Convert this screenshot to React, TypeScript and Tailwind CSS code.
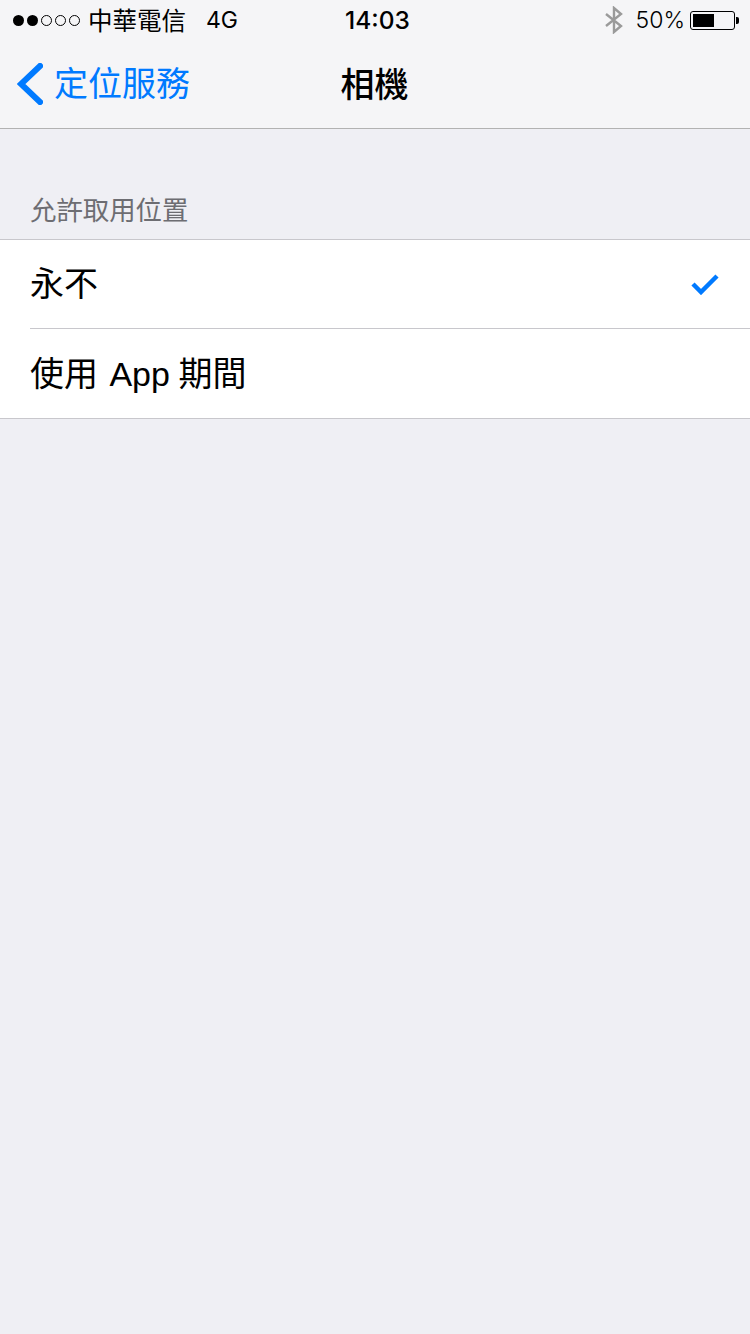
const font = { fontFamily: '"Liberation Sans", "Noto Sans CJK TC", sans-serif' };
const statusFont = { fontFamily: '"Inter", "Noto Sans CJK TC", sans-serif' };

function Dots() {
  return (
    <div className="flex items-center gap-[3px]">
      <span className="w-[11px] h-[11px] rounded-full bg-black" />
      <span className="w-[11px] h-[11px] rounded-full bg-black" />
      <span className="w-[11px] h-[11px] rounded-full border border-black" />
      <span className="w-[11px] h-[11px] rounded-full border border-black" />
      <span className="w-[11px] h-[11px] rounded-full border border-black" />
    </div>
  );
}

function Battery() {
  return (
    <div className="flex items-center">
      <div className="w-[45px] h-[19px] rounded-[3px] border border-black p-[2px]">
        <div className="w-[21px] h-full bg-black" />
      </div>
      <div className="w-[3px] h-[7px] bg-black rounded-r-[2px] ml-[1px]" />
    </div>
  );
}

export default function App() {
  return (
    <div className="w-[750px] h-[1334px] bg-[#efeff4] text-black overflow-hidden" style={font}>
      {/* Status + nav */}
      <div className="h-[129px] bg-[#f5f5f7] border-b border-[#b2b2b2]">
        <div className="h-[40px] flex items-center justify-between pl-[13px] pr-[11px] relative" style={statusFont}>
          <div className="flex items-center">
            <Dots />
            <span className="ml-[8px] mt-[2px] leading-none text-[24.5px]">中華電信</span>
            <span className="ml-[20px] mt-[1px] leading-none text-[23px]">4G</span>
          </div>
          <span className="absolute left-[345px] top-[8px] text-[24.5px] font-medium leading-none">14:03</span>
          <div className="flex items-center">
            <svg width="18" height="28" viewBox="0 0 18 28" fill="none" stroke="#9a9a9a" strokeWidth="2.4">
              <path d="M1 8 L16 20 L9 26 L9 2 L16 8 L1 20" />
            </svg>
            <span className="ml-[13px] text-[23px] leading-none font-light">50%</span>
            <div className="ml-[5px]">
              <Battery />
            </div>
          </div>
        </div>
        <div className="h-[88px] relative flex items-center justify-center">
          <div className="absolute left-[17px] top-0 h-[88px] flex items-center">
            <svg width="26" height="42" viewBox="0 0 26 42" fill="none" stroke="#007aff" strokeWidth="6" strokeLinecap="square">
              <path d="M23 3 L4 21 L23 39" />
            </svg>
            <span className="ml-[11px] text-[34px] leading-none text-[#007aff]">定位服務</span>
          </div>
          <span className="text-[34px] font-medium leading-none mt-[1px] -ml-[1px]">相機</span>
        </div>
      </div>

      {/* Section */}
      <div className="h-[110px] flex items-end pl-[30px] pb-[15px]">
        <span className="text-[26.4px] leading-none text-[#6d6d72]">允許取用位置</span>
      </div>
      <div className="bg-white border-y border-[#c8c7cc]">
        <div className="h-[88px] flex items-center justify-between pr-[31px] pl-[30px]">
          <span className="text-[34px] leading-none">永不</span>
          <svg width="28" height="22" viewBox="0 0 28 22" fill="none" stroke="#007aff" strokeWidth="4.5">
            <path d="M2 11 L10 19 L26 3" />
          </svg>
        </div>
        <div className="ml-[30px] border-t border-[#c8c7cc]" />
        <div className="h-[89px] flex items-center pl-[30px]">
          <span className="text-[34px] leading-none">
            <span className="mr-[2px]">使用</span> App <span className="-ml-[1px]">期間</span>
          </span>
        </div>
      </div>
    </div>
  );
}
